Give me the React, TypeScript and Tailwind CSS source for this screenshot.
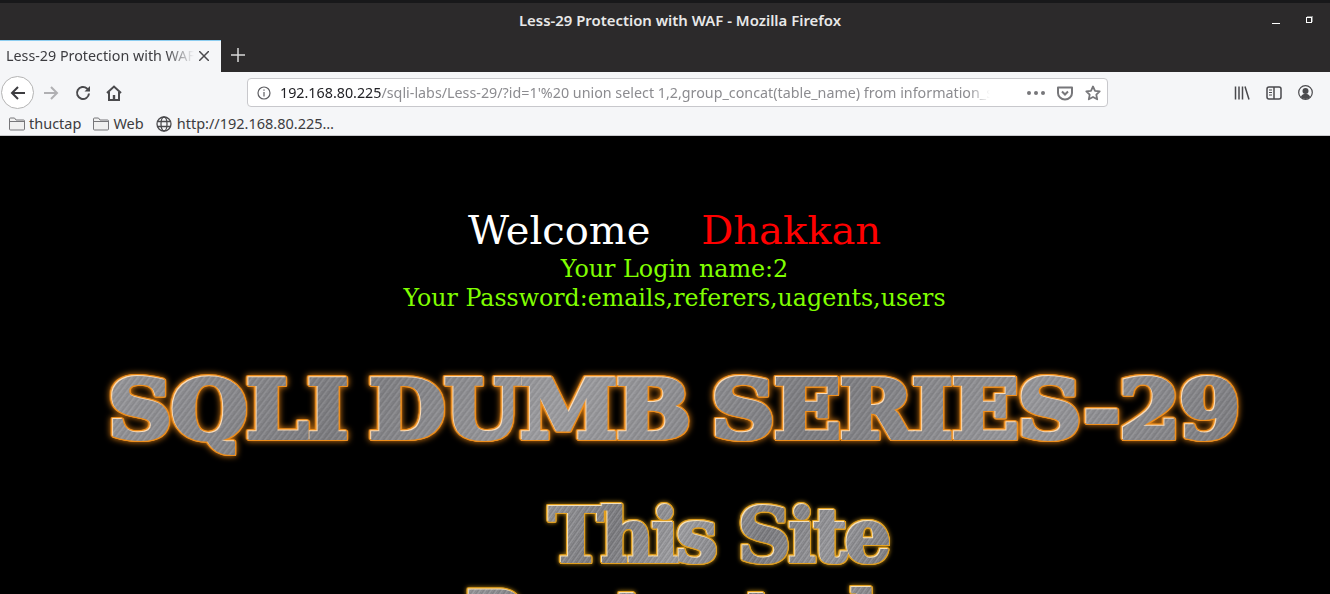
const gradientText =
  "bg-[linear-gradient(115deg,#ffffff1f_0%,#00000014_22%,#ffffff2b_40%,#00000014_62%,#ffffff1f_80%,#00000014_100%),repeating-linear-gradient(125deg,#8c8c90_0px,#78787c_1.5px,#9a9a9e_3px,#7e7e82_4.5px)] bg-clip-text text-transparent font-bold whitespace-nowrap";

const bigGlow =
  "[filter:drop-shadow(-1px_-1px_0_#ffffffb0)_drop-shadow(1px_0_0_#ee8e1c)_drop-shadow(-1px_0_0_#ee8e1c)_drop-shadow(0_1px_0_#ee8e1c)_drop-shadow(0_-1px_0_#ee8e1c)_drop-shadow(0_0_3px_#d87c14)]";

const smallGlow =
  "[filter:drop-shadow(-1px_-1px_0_#ffffffb0)_drop-shadow(1px_0_0_#e2a020)_drop-shadow(-1px_0_0_#e2a020)_drop-shadow(0_1px_0_#e2a020)_drop-shadow(0_-1px_0_#e2a020)_drop-shadow(0_0_2px_#b88414)]";

function BackIcon() {
  return (
    <svg width="18" height="18" viewBox="0 0 18 18" fill="none" stroke="#3d3d40" strokeWidth="2">
      <path d="M16 9H3M9 3L3 9l6 6" />
    </svg>
  );
}

function ForwardIcon() {
  return (
    <svg width="18" height="18" viewBox="0 0 18 18" fill="none" stroke="#b0b0b3" strokeWidth="2">
      <path d="M2 9h13M9 3l6 6-6 6" />
    </svg>
  );
}

function ReloadIcon() {
  return (
    <svg width="16" height="16" viewBox="0 0 16 16" fill="none" stroke="#4a4a4d" strokeWidth="2">
      <path d="M14 8.500A6 6 0 1 1 12 3.500L14.500 5.500" />
      <path d="M15 1v5.500H9.500" fill="#4a4a4d" stroke="none" />
    </svg>
  );
}

function HomeIcon() {
  return (
    <svg width="16" height="16" viewBox="0 0 16 16" fill="none" stroke="#4a4a4d" strokeWidth="2">
      <path d="M1 8l7-6.500L15 8M3 7v8h10V7" />
      <rect x="6.800" y="10" width="2.400" height="5" fill="#4a4a4d" stroke="none" />
    </svg>
  );
}

function FolderIcon() {
  return (
    <svg width="16" height="14" viewBox="0 0 16 14" fill="#f0f0f0" stroke="#77777a" strokeWidth="1">
      <path d="M.5 12V2a1 1 0 0 1 1-1h4l1.500 2h7.500a1 1 0 0 1 1 1v8a1 1 0 0 1-1 1h-13a1 1 0 0 1-1-1z" />
      <path d="M.5 4.500h15" />
    </svg>
  );
}

function GlobeIcon() {
  return (
    <svg width="16" height="16" viewBox="0 0 16 16" fill="none" stroke="#4a4a4d" strokeWidth="1.300">
      <circle cx="8" cy="8" r="7" />
      <ellipse cx="8" cy="8" rx="3" ry="7" />
      <path d="M1.500 5.500h13M1.500 10.500h13" />
    </svg>
  );
}

function InfoIcon() {
  return (
    <svg width="14" height="14" viewBox="0 0 14 14" fill="none" stroke="#5e5e62" strokeWidth="1.200">
      <circle cx="7" cy="7" r="6" />
      <path d="M7 6v4.500M7 3.500v1.300" />
    </svg>
  );
}

function PocketIcon() {
  return (
    <svg width="16" height="16" viewBox="0 0 16 16" fill="none" stroke="#77777a" strokeWidth="2">
      <path d="M1 2.500h14V8a7 6.500 0 0 1-14 0z" strokeLinejoin="round" />
      <path d="M5 6.500L8 9.500l3-3" />
    </svg>
  );
}

function StarIcon() {
  return (
    <svg width="16" height="16" viewBox="0 0 16 16" fill="none" stroke="#77777a" strokeWidth="1.800" strokeLinejoin="round">
      <path d="M8 1.500l2 4.300 4.700.6-3.400 3.200.9 4.700L8 12l-4.200 2.300.9-4.700L1.300 6.400 6 5.800z" />
    </svg>
  );
}

function LibraryIcon() {
  return (
    <svg width="16" height="16" viewBox="0 0 16 16" fill="none" stroke="#4a4a4d" strokeWidth="1.500">
      <path d="M1.500 1.500v13M5 1.500v13M8.500 1.500v13M11 1.500l4 13" />
    </svg>
  );
}

function SidebarIcon() {
  return (
    <svg width="16" height="14" viewBox="0 0 16 14" fill="none" stroke="#4a4a4d" strokeWidth="1.500">
      <rect x="1" y="1" width="14" height="12" rx="2" />
      <path d="M8 1v12" />
      <path d="M3 4h3M3 6.500h3M3 9h3" strokeWidth="1" />
    </svg>
  );
}

function AccountIcon() {
  return (
    <svg width="15" height="15" viewBox="0 0 15 15" fill="none" stroke="#4a4a4d" strokeWidth="1.200">
      <circle cx="7.500" cy="7.500" r="6.800" />
      <circle cx="7.500" cy="6" r="3" fill="#4a4a4d" stroke="none" />
      <path d="M2.800 12c1-2.500 2.500-3 4.700-3s3.700.5 4.700 3a6.800 6.800 0 0 1-9.400 0z" fill="#4a4a4d" stroke="none" />
    </svg>
  );
}

function Browser() {
  return (
    <div className="font-['Noto_Sans',sans-serif] shrink-0">
      {/* title bar */}
      <div className="h-10 bg-[#2c2a2b] border-t-[3px] border-[#18181a] flex items-start justify-center pl-[30px] pt-[7px] relative">
        <span className="text-[14.900px] leading-[20px] font-semibold text-[#e8e8e8]">Less-29 Protection with WAF - Mozilla Firefox</span>
        <div className="absolute right-[18px] top-[14px] flex items-start gap-[26px]">
          <div className="w-2 h-px bg-white mt-[6px]" />
          <div className="w-[6px] h-[6px] border border-white shadow-[1px_-1px_0_#888]" />
        </div>
      </div>
      {/* tabs */}
      <div className="h-[32px] bg-[#2c2a2b] flex">
        <div className="w-[221px] bg-[#f5f6f8] border-t border-[#8ccdf0] flex items-center pl-[6px] pr-[12px] pb-[2px]">
          <span className="flex-1 overflow-hidden whitespace-nowrap text-[14.300px] text-[#3c3c40] [mask-image:linear-gradient(to_right,black_85%,transparent)]">
            Less-29 Protection with WAF
          </span>
          <svg width="10" height="10" viewBox="0 0 10 10" stroke="#4a4a4d" strokeWidth="1.500" className="ml-[5px]">
            <path d="M0 0l10 10M10 0L0 10" />
          </svg>
        </div>
        <div className="w-[34px] flex items-center justify-center text-[#d8d8d8] pb-[2px]">
          <svg width="14" height="14" viewBox="0 0 14 14" stroke="currentColor" strokeWidth="1.500">
            <path d="M7 0v14M0 7h14" />
          </svg>
        </div>
      </div>
      {/* nav bar */}
      <div className="h-[41px] bg-[#f5f6f8] flex items-center pl-px">
        <div className="w-[33px] h-[33px] rounded-full border border-[#b4b4b4] bg-white flex items-center justify-center">
          <BackIcon />
        </div>
        <div className="ml-[8px] w-[18px]"><ForwardIcon /></div>
        <div className="ml-[15px] w-[16px]"><ReloadIcon /></div>
        <div className="ml-[15px] w-[16px]"><HomeIcon /></div>
        <div className="ml-[125px] w-[861px] h-[29px] rounded-[4px] border border-[#c8c8cc] bg-white flex items-center pl-[9px] pr-[6px]">
          <InfoIcon />
          <span className="ml-[9px] flex-1 overflow-hidden whitespace-nowrap text-[14.300px] text-[#8c8c90] [mask-image:linear-gradient(to_right,black_97%,transparent)]">
            <span className="text-[#222226]">192.168.80.225</span>/sqli-labs/Less-29/?id=1'%20 union select 1,2,group_concat(table_name) from information_schema.tables
          </span>
          <div className="ml-[37px] flex gap-[3px]">
            <span className="w-[4px] h-[4px] rounded-full bg-[#77777a]" />
            <span className="w-[4px] h-[4px] rounded-full bg-[#77777a]" />
            <span className="w-[4px] h-[4px] rounded-full bg-[#77777a]" />
          </div>
          <div className="ml-[12px]"><PocketIcon /></div>
          <div className="ml-[12px]"><StarIcon /></div>
        </div>
        <div className="ml-[126px] flex items-center gap-[16px]">
          <LibraryIcon />
          <SidebarIcon />
          <AccountIcon />
        </div>
      </div>
      {/* bookmarks */}
      <div className="h-[23px] bg-[#f5f6f8] border-b border-[#c9c9cc] flex items-center pl-[9px] text-[14.500px] text-[#3c3c40]">
        <FolderIcon />
        <span className="ml-[4px]">thuctap</span>
        <div className="ml-[12px]"><FolderIcon /></div>
        <span className="ml-[4px]">Web</span>
        <div className="ml-[12px]"><GlobeIcon /></div>
        <span className="ml-[5px]">http://192.168.80.225…</span>
      </div>
    </div>
  );
}

export default function App() {
  return (
    <div className="w-[1330px] h-[594px] overflow-hidden flex flex-col bg-black">
      <Browser />
      <div className="flex-1 overflow-hidden flex flex-col items-center pl-[19px] font-['DejaVu_Serif',serif]">
        <div className="mt-[69px] text-[40px] leading-[50px] text-white whitespace-pre">
          Welcome{"    "}<span className="text-[#ff0000]">Dhakkan</span>
        </div>
        <div className="text-[23.800px] leading-[29px] text-[#80ff00]">Your Login name:2</div>
        <div className="text-[23.700px] leading-[29px] text-[#80ff00]">Your Password:emails,referers,uagents,users</div>
        <div className={`mt-[42px] text-[80px] leading-[110px] tracking-[-1px] [word-spacing:-7px] scale-x-[1.1] ${gradientText} [-webkit-text-stroke:4px_transparent] ${bigGlow}`}>
          SQLI DUMB SERIES-29
        </div>
        <div className={`mt-[26px] ml-[88px] text-[74px] leading-[90px] tracking-[-3px] ${gradientText} [-webkit-text-stroke:2px_transparent] ${smallGlow}`}>
          This Site
        </div>
        <div className={`mt-[-7px] mr-[4px] text-[74px] leading-[90px] tracking-[1px] ${gradientText} [-webkit-text-stroke:2px_transparent] ${smallGlow}`}>
          Protected
        </div>
      </div>
    </div>
  );
}
